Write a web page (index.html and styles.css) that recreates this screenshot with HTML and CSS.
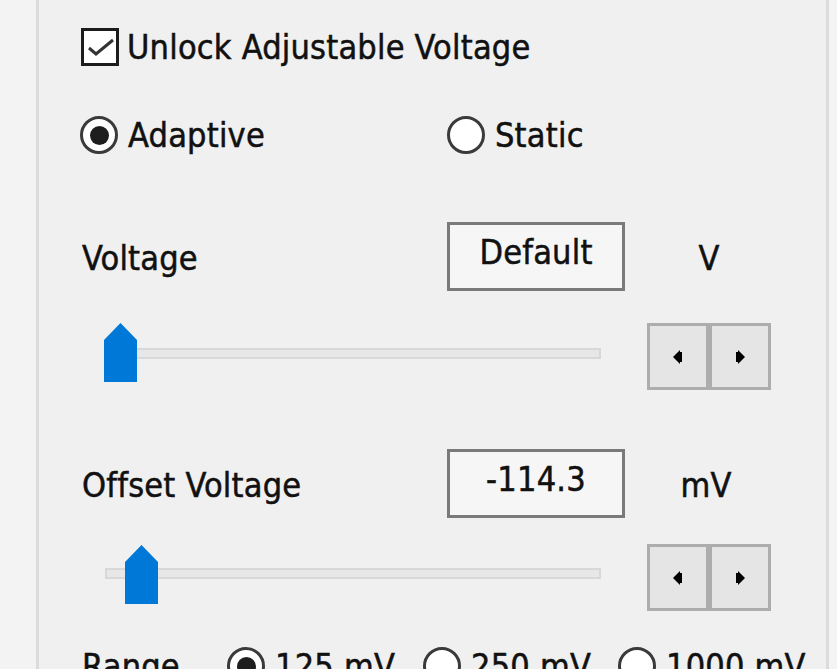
FILE: index.html
```html
<!DOCTYPE html>
<html>
<head>
<meta charset="utf-8">
<link rel="stylesheet" href="styles.css">
</head>
<body>
<div class="page">
  <div class="gutter"></div>
  <div class="panel">
    <div class="check-row">
      <span class="checkbox">
        <svg width="32" height="32" viewBox="0 0 32 32"><polyline points="5,17 12,23 29,9" fill="none" stroke="#333" stroke-width="3"/></svg>
      </span>
      <span class="txt">Unlock Adjustable Voltage</span>
    </div>

    <div class="mode-row">
      <span class="radio-item adaptive"><span class="radio checked"></span><span class="txt">Adaptive</span></span>
      <span class="radio-item"><span class="radio"></span><span class="txt">Static</span></span>
    </div>

    <div class="value-row first">
      <span class="label">Voltage</span>
      <span class="valbox">Default</span>
      <span class="unit">V</span>
    </div>

    <div class="slider-row first">
      <div class="slider">
        <div class="track"></div>
        <svg class="thumb" style="left:0px" width="33" height="59" viewBox="0 0 33 59"><polygon points="0,17 16.5,0 33,17 33,59 0,59" fill="#0078d7"/></svg>
      </div>
      <div class="spin">
        <span class="spin-btn"><svg width="12" height="16" viewBox="0 0 12 16"><polygon points="1,8 8,1 8,15" fill="#000"/><rect x="8" y="3" width="2" height="10" fill="#000"/></svg></span>
        <span class="spin-btn"><svg width="12" height="16" viewBox="0 0 12 16"><rect x="2" y="3" width="2" height="10" fill="#000"/><polygon points="11,8 4,1 4,15" fill="#000"/></svg></span>
      </div>
    </div>

    <div class="value-row second">
      <span class="label">Offset Voltage</span>
      <span class="valbox">-114.3</span>
      <span class="unit">mV</span>
    </div>

    <div class="slider-row second">
      <div class="slider">
        <div class="track"></div>
        <svg class="thumb" style="left:21px" width="33" height="59" viewBox="0 0 33 59"><polygon points="0,17 16.5,0 33,17 33,59 0,59" fill="#0078d7"/></svg>
      </div>
      <div class="spin">
        <span class="spin-btn"><svg width="12" height="16" viewBox="0 0 12 16"><polygon points="1,8 8,1 8,15" fill="#000"/><rect x="8" y="3" width="2" height="10" fill="#000"/></svg></span>
        <span class="spin-btn"><svg width="12" height="16" viewBox="0 0 12 16"><rect x="2" y="3" width="2" height="10" fill="#000"/><polygon points="11,8 4,1 4,15" fill="#000"/></svg></span>
      </div>
    </div>

    <div class="range-row">
      <span class="label range-label">Range</span>
      <span class="radio-item r1"><span class="radio checked"></span><span class="txt">125 mV</span></span>
      <span class="radio-item r2"><span class="radio"></span><span class="txt">250 mV</span></span>
      <span class="radio-item r3"><span class="radio"></span><span class="txt">1000 mV</span></span>
    </div>
  </div>
  <div class="rgutter"></div>
</div>
</body>
</html>
```

FILE: styles.css
```css
* { box-sizing: border-box; }
html, body {
  margin: 0;
  padding: 0;
  background: #f0f0f0;
  overflow: hidden;
}
body {
  font-family: "DejaVu Sans Condensed", "Liberation Sans", sans-serif;
  font-size: 34px;
  color: #111;
  -webkit-text-stroke: 0.5px #111;
  letter-spacing: 0.2px;
}
.page {
  display: flex;
  width: 837px;
  height: 669px;
}
.gutter {
  width: 36px;
  background: #f3f3f3;
  flex: none;
}
.rgutter {
  flex: 1;
  background: #f4f4f4;
}
.panel {
  width: 793px;
  flex: none;
  border-left: 3px solid #dcdcdc;
  border-right: 3px solid #dcdcdc;
  padding-left: 41px;
  display: flex;
  flex-direction: column;
  overflow: hidden;
}
.check-row {
  margin-top: 28px;
  height: 38px;
  display: flex;
  align-items: center;
}
.checkbox {
  width: 38px;
  height: 38px;
  margin-left: 1px;
  border: 3px solid #1c1c1c;
  background: #fff;
  display: flex;
  align-items: center;
  justify-content: center;
  flex: none;
}
.check-row .txt {
  margin-left: 8px;
  line-height: 38px;
}
.mode-row {
  margin-top: 50px;
  height: 38px;
  display: flex;
}
.radio-item {
  display: flex;
  align-items: center;
  height: 38px;
}
.radio-item .txt {
  margin-left: 10px;
  line-height: 38px;
}
.adaptive {
  width: 367px;
}
.radio {
  width: 38px;
  height: 38px;
  border-radius: 50%;
  border: 3px solid #3a3a3a;
  background: #fff;
  display: flex;
  align-items: center;
  justify-content: center;
  flex: none;
}
.radio.checked::after {
  content: "";
  width: 19px;
  height: 19px;
  border-radius: 50%;
  background: #1e1e1e;
}
.value-row {
  height: 69px;
  display: flex;
  align-items: center;
}
.value-row.first { margin-top: 68px; }
.value-row.second { margin-top: 59px; }
.label {
  width: 367px;
  padding-left: 2px;
  padding-top: 3px;
  flex: none;
}
.valbox {
  width: 178px;
  height: 69px;
  border: 3px solid #7a7a7a;
  background: #f6f6f6;
  display: flex;
  justify-content: center;
  align-items: center;
  padding-bottom: 9px;
  flex: none;
}
.unit {
  margin-left: 22px;
  width: 124px;
  text-align: center;
  padding-top: 3px;
}
.second .unit {
  padding-right: 6px;
}
.slider-row {
  height: 67px;
  display: flex;
}
.slider-row.first { margin-top: 32px; }
.slider-row.second { margin-top: 26px; }
.slider {
  position: relative;
  margin-left: 24px;
  width: 497px;
  height: 67px;
  flex: none;
}
.track {
  margin-top: 25px;
  margin-left: 1px;
  height: 11px;
  background: #e7e7e7;
  border: 2px solid #d8d8d8;
}
.second .track { margin-top: 24px; }
.thumb {
  position: absolute;
  top: 0;
}
.second .thumb { top: 1px; }
.spin {
  margin-left: 46px;
  display: flex;
  height: 67px;
}
.spin-btn {
  width: 62px;
  height: 67px;
  border: 3px solid #adadad;
  background: #e5e5e5;
  display: flex;
  align-items: center;
  justify-content: center;
}
.range-row {
  margin-top: 36px;
  height: 38px;
  display: flex;
  align-items: center;
  flex: none;
}
.range-label {
  width: 147px;
  padding-top: 0;
}
.r1 { width: 196px; }
.r2 { width: 195px; }
```
